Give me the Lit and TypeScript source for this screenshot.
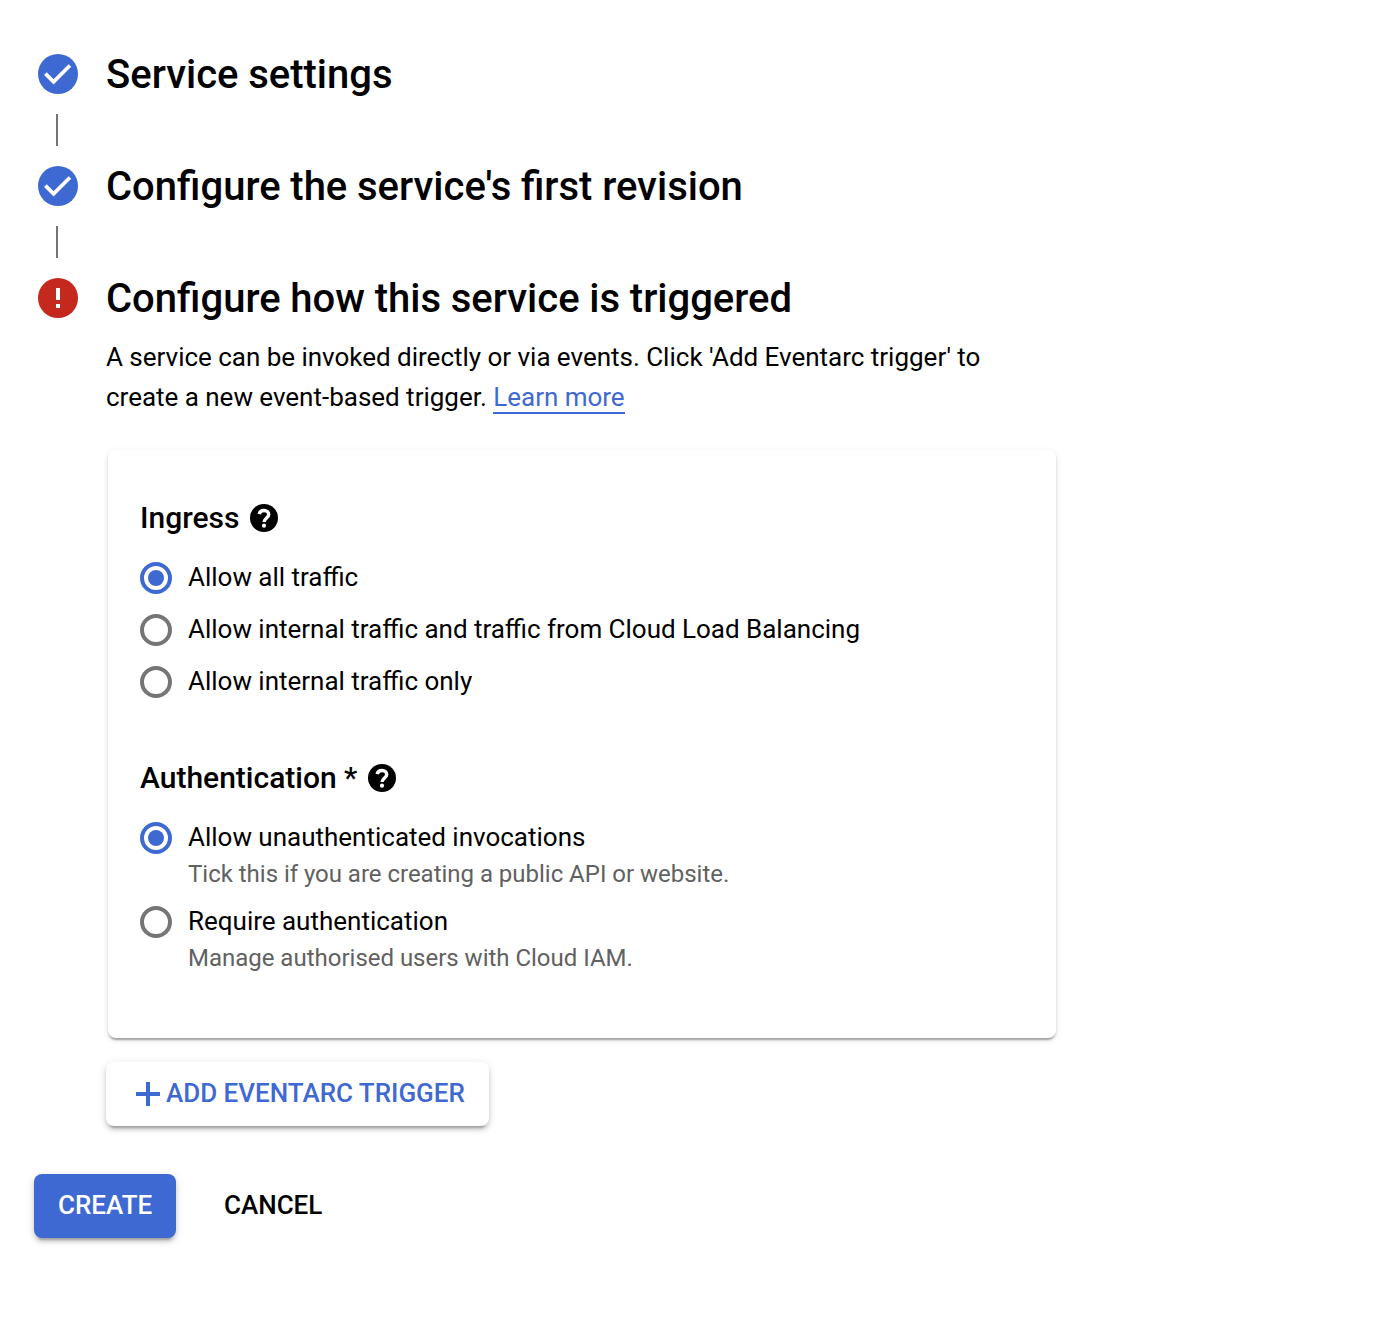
import { LitElement, html, css } from "lit";
import { customElement, state } from "lit/decorators.js";

const check = html`<svg class="badge" viewBox="0 0 40 40"><circle cx="20" cy="20" r="20" fill="#3f69d2"/><path d="M7.4 19.6 15.6 27.8 31.9 11.5" fill="none" stroke="#fff" stroke-width="3.7"/></svg>`;
const alert = html`<svg class="badge" viewBox="0 0 40 40"><circle cx="20" cy="20" r="20" fill="#c5281c"/><path d="M18 10h4v12h-4zM18 26h4v4h-4z" fill="#fff"/></svg>`;
const help = html`<svg class="help" viewBox="0 0 28 28"><circle cx="14" cy="14" r="14"/><path d="M9.2 10.2C9.7 7.9 11.5 6.6 14 6.6c2.7 0 4.7 1.6 4.7 4 0 3.4-4.6 3.5-4.6 7.5" fill="none" stroke="#fff" stroke-width="3.5"/><circle cx="14" cy="21.7" r="2.1" fill="#fff"/></svg>`;

interface Option { label: string; hint?: string }

const ingressOptions: Option[] = [
  { label: "Allow all traffic" },
  { label: "Allow internal traffic and traffic from Cloud Load Balancing" },
  { label: "Allow internal traffic only" },
];
const authOptions: Option[] = [
  { label: "Allow unauthenticated invocations", hint: "Tick this if you are creating a public API or website." },
  { label: "Require authentication", hint: "Manage authorised users with Cloud IAM." },
];

@customElement("app-root")
export class AppRoot extends LitElement {
  @state() private ingress = 0;
  @state() private auth = 0;

  static styles = css`
    :host { display: block; box-sizing: border-box; min-height: 1324px; padding: 46px 34px 0; background: #fff; color: #000; font-family: Roboto, sans-serif; word-spacing: -0.1px; }
    * { box-sizing: border-box; }
    svg { display: block; flex: none; }
    .step { display: flex; align-items: center; height: 56px; gap: 28px; padding-left: 4px; }
    .badge { width: 40px; height: 40px; }
    .line { width: 2px; height: 32px; margin: 12px 0 12px 22px; background: #757575; }
    h2 { margin: 0; padding-top: 2px; font-size: 40px; font-weight: 500; line-height: 54px; white-space: nowrap; word-spacing: -0.2px; }
    .body { margin-left: 72px; }
    .intro { margin: 11px 0 0; font-size: 26px; line-height: 40px; white-space: nowrap; }
    a { color: #3f69d2; text-decoration: none; display: inline-block; line-height: 30px; border-bottom: 2px solid #3f69d2; }
    .card { width: 948px; height: 588px; margin: 33px 0 0 2px; padding: 48px 32px 0; border-radius: 8px; box-shadow: 0 4px 2px -2px rgba(0,0,0,.2), 0 2px 2px rgba(0,0,0,.14), 0 2px 6px rgba(0,0,0,.12); }
    .head { display: flex; align-items: center; gap: 11px; height: 40px; margin-bottom: 14px; }
    h3 { margin: 0; font-size: 30px; line-height: 36px; font-weight: 500; white-space: nowrap; }
    .help { width: 28px; height: 28px; }
    .group + .group { margin-top: 50px; }
    .option { display: flex; gap: 16px; min-height: 52px; padding-top: 10px; cursor: pointer; }
    .option.hinted { min-height: 84px; }
    .radio { flex: none; width: 32px; height: 32px; border: 4px solid #757575; border-radius: 50%; display: grid; place-items: center; }
    .radio.on { border-color: #3f69d2; }
    .radio.on::after { content: ""; width: 16px; height: 16px; border-radius: 50%; background: #3f69d2; }
    .label { font-size: 26px; line-height: 30px; white-space: nowrap; }
    .hint { margin-top: 6px; font-size: 24px; line-height: 32px; color: #616161; white-space: nowrap; }
    button { display: flex; align-items: center; height: 64px; border: 0; padding: 0 24px; background: #fff; border-radius: 8px; font: 500 26px/32px Roboto, sans-serif; letter-spacing: -0.01px; white-space: nowrap; }
    button span { padding-bottom: 2px; }
    .raised { box-shadow: 0 6px 2px -4px rgba(0,0,0,.2), 0 4px 4px rgba(0,0,0,.14), 0 2px 10px rgba(0,0,0,.12); }
    .add { width: 383px; margin-top: 24px; padding: 0 0 0 30px; gap: 6px; color: #3f69d2; }
    .plus { width: 24px; height: 24px; }
    .actions { display: flex; gap: 24px; margin-top: 48px; }
    .create { width: 142px; background: #3f69d2; color: #fff; }
    .cancel { color: #000; }
  `;

  private options(items: Option[], selected: number, pick: (i: number) => void) {
    return items.map((o, i) => html`
      <div class="option ${o.hint ? "hinted" : ""}" role="radio" aria-checked=${i === selected} @click=${() => pick(i)}>
        <span class="radio ${i === selected ? "on" : ""}"></span>
        <div><div class="label">${o.label}</div>${o.hint ? html`<div class="hint">${o.hint}</div>` : ""}</div>
      </div>`);
  }

  render() {
    return html`
      <div class="step">${check}<h2>Service settings</h2></div>
      <div class="line"></div>
      <div class="step">${check}<h2>Configure the service's first revision</h2></div>
      <div class="line"></div>
      <div class="step">${alert}<h2>Configure how this service is triggered</h2></div>
      <div class="body">
        <p class="intro">A service can be invoked directly or via events. Click 'Add Eventarc trigger' to<br />create a new event-based trigger. <a>Learn more</a></p>
        <div class="card">
          <div class="group" role="radiogroup">
            <div class="head"><h3>Ingress</h3>${help}</div>
            ${this.options(ingressOptions, this.ingress, (i) => (this.ingress = i))}
          </div>
          <div class="group" role="radiogroup">
            <div class="head"><h3>Authentication *</h3>${help}</div>
            ${this.options(authOptions, this.auth, (i) => (this.auth = i))}
          </div>
        </div>
        <button class="add raised"><svg class="plus" viewBox="0 0 24 24"><path d="M10 0h4v10h10v4H14v10h-4V14H0v-4h10z" fill="#3f69d2"/></svg><span>ADD EVENTARC TRIGGER</span></button>
      </div>
      <div class="actions"><button class="create raised"><span>CREATE</span></button><button class="cancel"><span>CANCEL</span></button></div>
    `;
  }
}
